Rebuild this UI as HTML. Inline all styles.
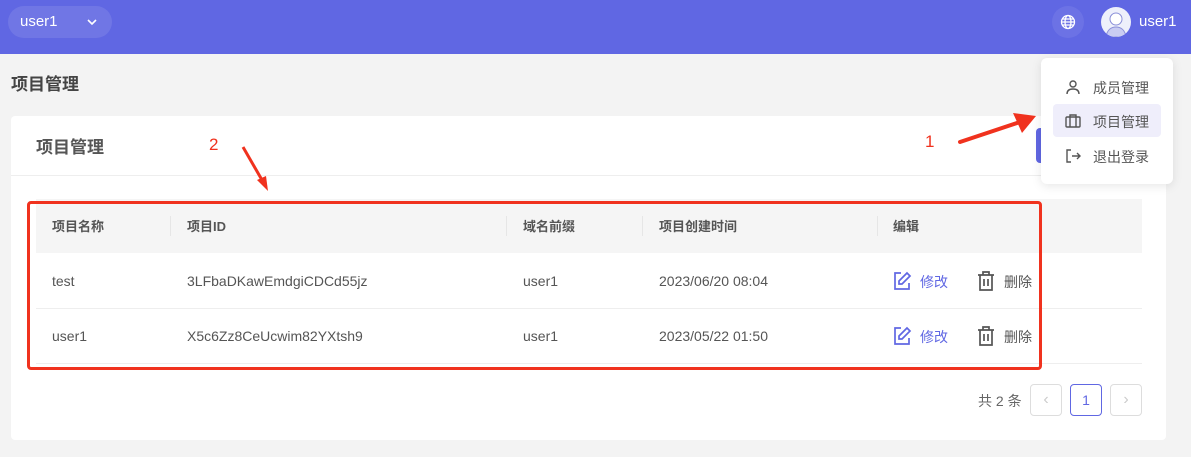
<!DOCTYPE html>
<html><head><meta charset="utf-8"><style>
*{box-sizing:border-box;margin:0;padding:0}
body{width:1191px;height:457px;background:#f3f3f3;font-family:"Liberation Sans","Noto Sans CJK SC",sans-serif;position:relative;overflow:hidden;color:#555}
.abs{position:absolute}
.hdr{left:0;top:0;width:1191px;height:54px;background:#6067e3}
.card{left:11px;top:116px;width:1155px;height:324px;background:#fff;border-radius:4px}
.th{top:199px;left:36px;width:1106px;height:54px;background:#f5f5f5}
.t{position:absolute;font-size:14px;color:#555}
.h{font-weight:600;font-size:13px;top:216px;color:#555}
.sep{position:absolute;width:1px;height:20px;background:#e6e6e6;top:216px}
</style></head><body>
<div class="abs hdr"></div>
<div class="abs" style="left:8px;top:6px;width:104px;height:32px;border-radius:16px;background:rgba(255,255,255,0.1)"></div>
<div class="abs" style="left:20px;top:13px;color:#fff;font-size:15px">user1</div>
<svg class="abs" style="left:86px;top:17px" width="12" height="10"><path d="M2 3l4 4 4-4" stroke="#fff" stroke-width="1.6" fill="none"/></svg>
<div class="abs" style="left:1052px;top:6px;width:32px;height:32px;border-radius:16px;background:rgba(255,255,255,0.08)"></div>
<svg class="abs" style="left:1060px;top:14px" width="16" height="16" viewBox="0 0 16 16" fill="none" stroke="#fff" stroke-width="1.3"><circle cx="8" cy="8" r="6.5"/><ellipse cx="8" cy="8" rx="3" ry="6.5"/><path d="M1.5 8h13M2.5 5h11M2.5 11h11"/></svg>
<div class="abs" style="left:1101px;top:7px;width:30px;height:30px;border-radius:15px;background:#eef0fb;overflow:hidden"><svg width="30" height="30"><circle cx="15" cy="12" r="6" fill="#fff" stroke="#8a8fd8"/><path d="M5 30c1-7 5-10 10-10s9 3 10 10z" fill="#c9ccf2" stroke="#8a8fd8"/></svg></div>
<div class="abs" style="left:1139px;top:13px;color:#fff;font-size:15px">user1</div>

<div class="abs" style="left:11px;top:70px;font-size:17px;font-weight:bold;color:#444">项目管理</div>
<div class="abs card"></div>
<div class="abs" style="left:36px;top:133px;font-size:17px;font-weight:bold;color:#555">项目管理</div>
<div class="abs" style="left:11px;top:175px;width:1155px;height:1px;background:#eee"></div>
<div class="abs" style="left:1036px;top:128px;width:10px;height:35px;background:#6067e3;border-radius:4px"></div>
<div class="abs th"></div>
<div class="sep" style="left:170px"></div><div class="sep" style="left:506px"></div><div class="sep" style="left:642px"></div><div class="sep" style="left:877px"></div>
<div class="t h" style="left:52px">项目名称</div>
<div class="t h" style="left:187px">项目ID</div>
<div class="t h" style="left:523px">域名前缀</div>
<div class="t h" style="left:659px">项目创建时间</div>
<div class="t h" style="left:893px">编辑</div>
<div class="abs" style="left:36px;top:308px;width:1106px;height:1px;background:#eee"></div>
<div class="abs" style="left:36px;top:363px;width:1106px;height:1px;background:#eee"></div>
<div class="t" style="left:52px;top:273px">test</div>
<div class="t" style="left:187px;top:273px">3LFbaDKawEmdgiCDCd55jz</div>
<div class="t" style="left:523px;top:273px">user1</div>
<div class="t" style="left:659px;top:273px">2023/06/20 08:04</div>
<div class="t" style="left:52px;top:328px">user1</div>
<div class="t" style="left:187px;top:328px">X5c6Zz8CeUcwim82YXtsh9</div>
<div class="t" style="left:523px;top:328px">user1</div>
<div class="t" style="left:659px;top:328px">2023/05/22 01:50</div>

<svg class="abs" style="left:892px;top:271px" width="20" height="20" viewBox="0 0 20 20" fill="none" stroke="#6067e3" stroke-width="1.7"><path d="M9 2H3v16h14v-6"/><path d="M15 2l3 3-8 8H7v-3z"/></svg>
<div class="t" style="left:920px;top:272px;color:#6067e3">修改</div>
<svg class="abs" style="left:977px;top:271px" width="18" height="20" viewBox="0 0 18 20" fill="none" stroke="#555" stroke-width="1.7"><path d="M1 4h16M6 4V1h6v3M3 4v15h12V4M7 8v7M11 8v7"/></svg>
<div class="t" style="left:1004px;top:272px">删除</div>
<svg class="abs" style="left:892px;top:326px" width="20" height="20" viewBox="0 0 20 20" fill="none" stroke="#6067e3" stroke-width="1.7"><path d="M9 2H3v16h14v-6"/><path d="M15 2l3 3-8 8H7v-3z"/></svg>
<div class="t" style="left:920px;top:327px;color:#6067e3">修改</div>
<svg class="abs" style="left:977px;top:326px" width="18" height="20" viewBox="0 0 18 20" fill="none" stroke="#555" stroke-width="1.7"><path d="M1 4h16M6 4V1h6v3M3 4v15h12V4M7 8v7M11 8v7"/></svg>
<div class="t" style="left:1004px;top:327px">删除</div>

<div class="abs" style="left:27px;top:201px;width:1015px;height:169px;border:3px solid #f0321e;border-radius:4px"></div>

<div class="t" style="left:978px;top:391px;color:#666">共 2 条</div>
<div class="abs" style="left:1030px;top:384px;width:32px;height:32px;border:1px solid #ddd;border-radius:4px;color:#ccc;text-align:center;line-height:30px">‹</div>
<div class="abs" style="left:1070px;top:384px;width:32px;height:32px;border:1px solid #6067e3;border-radius:4px;color:#6067e3;text-align:center;line-height:30px;font-size:14px">1</div>
<div class="abs" style="left:1110px;top:384px;width:32px;height:32px;border:1px solid #ddd;border-radius:4px;color:#ccc;text-align:center;line-height:30px">›</div>

<div class="abs" style="left:1041px;top:58px;width:132px;height:126px;background:#fff;border-radius:6px;box-shadow:0 2px 10px rgba(0,0,0,0.1)"></div>
<div class="abs" style="left:1053px;top:104px;width:108px;height:33px;background:#efeefb;border-radius:4px"></div>
<svg class="abs" style="left:1065px;top:79px" width="16" height="16" viewBox="0 0 16 16" fill="none" stroke="#555" stroke-width="1.4"><circle cx="8" cy="5" r="3"/><path d="M2 15c0-4 3-5 6-5s6 1 6 5"/></svg>
<svg class="abs" style="left:1065px;top:113px" width="16" height="16" viewBox="0 0 16 16" fill="none" stroke="#555" stroke-width="1.4"><rect x="1" y="4" width="14" height="10" rx="1"/><path d="M5 4V2h6v2M5 4v10M11 4v10"/></svg>
<svg class="abs" style="left:1065px;top:148px" width="16" height="16" viewBox="0 0 16 16" fill="none" stroke="#555" stroke-width="1.4"><path d="M6 2H2v12h4M7 8h8M12 5l3 3-3 3"/></svg>
<div class="t" style="left:1093px;top:78px;font-size:14px">成员管理</div>
<div class="t" style="left:1093px;top:112px;font-size:14px">项目管理</div>
<div class="t" style="left:1093px;top:147px;font-size:14px">退出登录</div>

<div class="abs" style="left:925px;top:132px;color:#f0321e;font-size:17px">1</div>
<div class="abs" style="left:209px;top:135px;color:#f0321e;font-size:17px">2</div>
<svg class="abs" style="left:0;top:0" width="1191" height="457"><path d="M960 142L1020 122" stroke="#f0321e" stroke-width="4" stroke-linecap="round"/><path d="M1036 116L1013 113L1022 133z" fill="#f0321e"/><path d="M243 147L262 180" stroke="#f0321e" stroke-width="3"/><path d="M268 191L257 180L266 176z" fill="#f0321e"/></svg>
</body></html>
